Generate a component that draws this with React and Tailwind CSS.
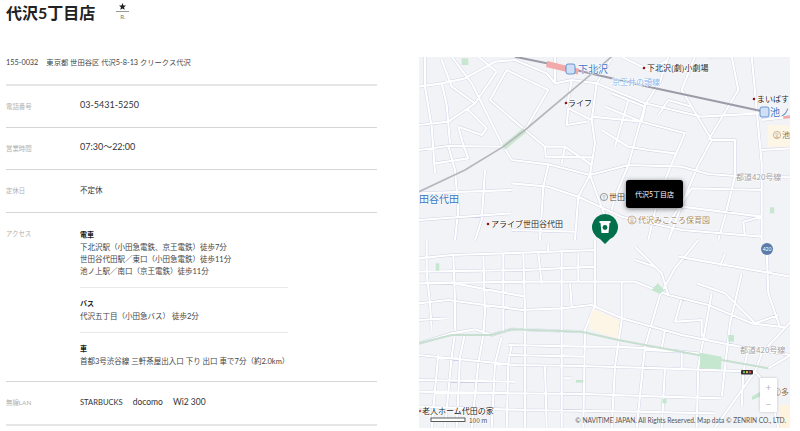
const FONT = "font-['Lato','Noto_Sans_CJK_JP',sans-serif]";

// roads traced from the top half of the map (3x crop coords)
const upperRoads = [
  [[12,300],[100,288],[265,290],[290,330],[400,343],[525,375],[640,345],[800,350],[880,372],[960,378],[1127,382]],
  [[110,20],[170,100],[215,190],[265,290]],
  [[12,110],[80,100],[150,85],[240,35],[300,30],[395,70],[420,100]],
  [[30,110],[50,230],[60,370]],
  [[80,100],[95,165],[105,280]],
  [[12,225],[100,215],[180,160],[245,65]],
  [[130,230],[145,285],[160,325],[60,340]],
  [[155,175],[215,235],[200,255],[130,230]],
  [[275,60],[225,150],[330,240],[400,120],[275,60]],
  [[525,375],[540,280],[530,210],[460,175],[455,225],[515,215]],
  [[530,210],[545,100],[590,25]],
  [[455,170],[470,90],[545,100],[690,160],[860,200],[1035,190]],
  [[640,345],[690,165],[735,95],[760,20]],
  [[560,240],[640,290],[700,300],[780,310]],
  [[590,130],[690,170],[680,215],[570,170]],
  [[530,200],[680,215],[810,250]],
  [[330,240],[390,290],[450,290],[530,345]],
  [[390,290],[392,320],[530,322]],
  [[525,375],[570,500]],
  [[525,375],[490,440],[480,570]],
  [[640,345],[600,440],[590,480]],
  [[730,195],[760,150],[830,170],[890,270],[960,270],[960,378]],
  [[810,250],[775,330],[730,440],[700,570]],
  [[890,270],[850,345],[810,440],[760,570]],
  [[1010,20],[1040,340],[1040,570]],
  [[880,20],[950,20],[970,120],[880,270]],
  [[1040,210],[1127,200]],
  [[1040,300],[1127,295]],
  [[960,378],[930,500],[910,570]],
  [[1040,420],[830,415],[760,520]],
  [[290,420],[12,430]],
  [[210,360],[200,510],[180,570]],
  [[290,400],[400,410],[490,440],[620,500]],
  [[400,345],[385,410],[375,570]],
  [[12,510],[290,490]],
  [[290,540],[480,545]],
  [[620,20],[700,60],[760,30]],
  [[840,20],[800,120],[830,170]],
  [[1040,500],[985,515],[990,560]],
  [[100,288],[120,360],[130,480],[120,570]],
  [[30,20],[30,110]],
  [[190,20],[245,65]],
  [[420,20],[420,100],[470,90]],
  [[640,450],[800,470],[1040,500]],
  [[600,290],[640,150]],
  [[180,160],[110,110],[80,30]],
  [[450,290],[440,340]],
  [[620,500],[800,540],[1040,560]],
];

// roads traced from the bottom half of the map (3x crop coords)
const lowerRoads = [
  [[12,55],[110,45],[330,38],[540,30]],
  [[12,130],[330,125],[540,125],[660,125],[760,165],[880,195],[1010,250],[1110,262]],
  [[12,190],[100,180],[320,210],[440,205],[530,195],[620,235],[800,285],[1000,325],[1127,345]],
  [[12,310],[110,280],[180,268],[230,285],[290,268],[510,275]],
  [[280,315],[510,320],[600,320],[700,325],[850,340]],
  [[12,345],[300,375],[500,378],[740,385],[1020,395]],
  [[12,455],[300,460],[510,462],[740,470],[920,475]],
  [[12,500],[330,510],[660,515],[900,520]],
  [[120,130],[330,170]],
  [[12,95],[330,90],[540,80]],
  [[35,0],[35,100],[45,190],[50,270]],
  [[115,45],[120,180],[120,270]],
  [[205,40],[210,215],[205,285],[190,370],[170,563]],
  [[265,40],[265,130],[265,280]],
  [[325,40],[330,210],[330,563]],
  [[370,40],[380,130]],
  [[440,30],[440,270],[440,563]],
  [[490,40],[490,125]],
  [[465,130],[470,200]],
  [[540,0],[540,195],[510,270],[505,563]],
  [[620,125],[620,240],[600,380],[590,563]],
  [[735,165],[690,320],[665,563]],
  [[800,175],[780,245],[860,240],[860,290]],
  [[890,160],[850,380],[845,563]],
  [[980,100],[945,250],[920,470]],
  [[1055,30],[1060,160],[1095,262]],
  [[845,130],[930,160],[1020,250],[1090,225]],
  [[1127,245],[1040,340],[1020,395],[900,563]],
  [[1020,395],[1060,440],[1090,563]],
  [[660,20],[740,100],[760,165]],
  [[850,0],[780,85],[735,165]],
  [[790,50],[1127,110]],
  [[930,40],[915,80]],
  [[1127,345],[1060,385]],
  [[750,385],[740,563]],
  [[70,345],[60,450],[50,563]],
  [[120,280],[110,350],[90,563]],
  [[260,290],[240,370],[230,563]],
  [[390,380],[395,563]],
  [[12,240],[95,235]],
  [[445,415],[470,415]],
  [[150,280],[135,350],[125,563]],
  [[290,315],[280,370],[275,563]],
  [[690,330],[800,335],[800,385]],
  [[750,270],[740,325]],
  [[1000,325],[985,395],[980,500]],
  [[280,345],[510,350]],
  [[400,10],[400,35]],
  [[660,60],[720,80]],
  [[12,420],[300,425]],
];

// crop coords -> one map-space path
const toPath = (lines, offsetY) =>
  lines
    .map((line) =>
      line
        .map(([x, y], i) => `${i === 0 ? 'M' : 'L'}${(x / 3 - 4).toFixed(1)} ${(y / 3 + offsetY).toFixed(1)}`)
        .join(' ')
    )
    .join(' ');

const roadPath = `${toPath(upperRoads, -7)} ${toPath(lowerRoads, 183)}`;

function Label({ x, y, size = 8, color = '#222222', children }) {
  return (
    <text
      x={x}
      y={y}
      fontSize={size}
      fill={color}
      stroke="#ffffff"
      strokeWidth="1"
      className="[paint-order:stroke] font-['Noto_Sans_CJK_JP',sans-serif]"
    >
      {children}
    </text>
  );
}

function RingIcon({ x, y, r = 3.6, color, glyph }) {
  return (
    <>
      <circle cx={x} cy={y} r={r} fill="none" stroke={color} strokeWidth="0.7" />
      <text x={x} y={y + 1.6} fontSize="4.4" fill={color} textAnchor="middle" className="font-['Noto_Sans_CJK_JP',sans-serif]">{glyph}</text>
    </>
  );
}

function MapDrawing() {
  return (
    <svg viewBox="0 0 371 371" className="absolute inset-0 w-full h-full">
      <polygon points="349,68 371,68 371,90 349,90" fill="#fdf5e6" />
      <polygon points="360,348 371,348 371,371 360,371" fill="#fdf3df" />

      <path d={roadPath} fill="none" stroke="#cdd0e4" strokeWidth="3" strokeLinejoin="round" />
      <path d={roadPath} fill="none" stroke="#ffffff" strokeWidth="2.2" strokeLinejoin="round" />

      {/* parks, canal and the cream block, in crop coords */}
      <g transform="translate(-4,183) scale(0.3333)">
        <polygon points="535,207 612,240 610,296 522,268 522,235" fill="#fdf6e6" />
        <polyline points="12,310 110,285 230,285 290,268 500,275 610,300 850,345 920,360 1060,385" fill="none" stroke="#c6dfd0" strokeWidth="6" />
        <polygon points="710,150 728,130 748,150 735,162" fill="#c5e6cf" />
        <polygon points="855,338 920,350 918,388 855,385" fill="#c5e6cf" />
        <polygon points="940,285 957,285 957,305 940,305" fill="#c5e6cf" />
        <polygon points="1010,470 1035,455 1035,470 1012,480" fill="#c5e6cf" />
        <polygon points="62,70 73,70 73,92 62,92" fill="#c5e6cf" />
        <polygon points="483,420 505,420 505,428 483,428" fill="#c5e6cf" />
        <polygon points="742,476 755,476 755,490 742,490" fill="#c5e6cf" />
      </g>
      <g transform="translate(-4,-7) scale(0.3333)">
        <polygon points="140,25 160,25 160,45 140,45" fill="#c9e6d0" />
        <polygon points="1065,472 1078,472 1078,490 1065,490" fill="#c9e6d0" />
        <polyline points="265,293 330,240" fill="none" stroke="#cbe7d2" strokeWidth="16" />
        <polyline points="12,425 150,360 265,290 330,240 520,80 590,20" fill="none" stroke="#b5b7bd" strokeWidth="5" />
        <polyline points="300,20 395,40 700,110 1035,182" fill="none" stroke="#9b9ba8" strokeWidth="6" />
        <polyline points="395,42 490,65" fill="none" stroke="#f2a9a9" strokeWidth="18" />
        <polyline points="1105,203 1127,200" fill="none" stroke="#f2a9a9" strokeWidth="8" />
      </g>

      {/* station marks */}
      <rect x="147" y="7" width="9" height="10" rx="2" fill="#cfe0f5" stroke="#4a7fc8" strokeWidth="0.8" />
      <rect x="341" y="50" width="9" height="10" rx="2" fill="#cfe0f5" stroke="#4a7fc8" strokeWidth="0.8" />
      <Label x={159} y={16} size={10} color="#3b74c4">下北沢</Label>
      <Label x={351} y={59} size={10} color="#3b74c4">池ノ</Label>
      <Label x={0} y={146} size={10} color="#3b74c4">田谷代田</Label>
      <Label x={193} y={28} color="#84b3ee">京王井の頭線</Label>

      <circle cx="225" cy="11" r="1.3" fill="#8c1616" />
      <Label x={228} y={14}>下北沢(劇)小劇場</Label>
      <circle cx="147" cy="46" r="1.3" fill="#8c1616" />
      <Label x={149} y={49}>ライフ</Label>
      <circle cx="335" cy="42" r="1.3" fill="#8c1616" />
      <Label x={338} y={45}>まいばす</Label>
      <circle cx="69" cy="167" r="1.3" fill="#8c1616" />
      <Label x={72} y={170}>アライブ世田谷代田</Label>
      <circle cx="1" cy="354" r="1.3" fill="#c06060" />
      <Label x={3} y={357}>老人ホーム代田の家</Label>

      <RingIcon x={358} y={78} color="#b79a70" glyph="文" />
      <Label x={363} y={81} color="#8a6d45">池</Label>
      <RingIcon x={185} y={140} color="#777777" glyph="〒" />
      <Label x={190} y={143} color="#444444">世田谷</Label>
      <RingIcon x={213} y={163} r={4} color="#c19a6b" glyph="文" />
      <Label x={219} y={166} color="#a58a64">代沢みこころ保育園</Label>
      <RingIcon x={358} y={335} color="#c19a6b" glyph="文" />
      <Label x={362} y={338} color="#8a6d45">多</Label>

      <Label x={317} y={123} color="#a0a0a6">都道420号線</Label>
      <Label x={321} y={296} color="#a0a0a6">都道420号線</Label>

      {/* route shield */}
      <circle cx="348" cy="192" r="6" fill="#5b7ca8" />
      <text x="348" y="194" fontSize="5" fill="#ffffff" textAnchor="middle" className="font-['Lato',sans-serif]">420</text>

      {/* signal */}
      <rect x="322" y="313" width="12" height="4.5" rx="1" fill="#333333" />
      <circle cx="325" cy="315.2" r="1.1" fill="#7fc56a" />
      <circle cx="328" cy="315.2" r="1.1" fill="#e8c44a" />
      <circle cx="331" cy="315.2" r="1.1" fill="#d9534f" />

      {/* scale bar */}
      <rect x="12" y="361" width="34" height="3.5" fill="#ffffff" stroke="#333333" strokeWidth="0.8" />
      <Label x={50} y={366} size={6.5} color="#444444">100 m</Label>
    </svg>
  );
}

function StorePin() {
  return (
    <div className="absolute left-[173px] top-[157px] w-[26px] h-[30px]">
      <svg viewBox="0 0 26 30" className="w-full h-full">
        <path d="M13 0a13 13 0 0 1 5 25l-5 5-5-5A13 13 0 0 1 13 0z" fill="#00704a" />
        <path d="M7.5 7h11v2h-1l-1 10h-7l-1-10h-1z" fill="#ffffff" />
        <circle cx="13" cy="13.5" r="2.4" fill="#00704a" />
      </svg>
    </div>
  );
}

function Tooltip() {
  return (
    <div className="absolute left-[207px] top-[123px] w-[57px] h-[28px] rounded-[3px] bg-black shadow-[0_1px_5px_rgba(0,0,0,0.5)] flex items-center justify-center text-white text-[7px]">
      代沢5丁目店
    </div>
  );
}

function ZoomControl() {
  return (
    <div className="absolute left-[341px] top-[321px] w-[17px] h-[34px] bg-white rounded-[1px] shadow-[0_0_3px_rgba(0,0,0,0.2)] flex flex-col items-center justify-around text-[10px] leading-none text-[#b5b5b5]">
      <span>+</span>
      <span>−</span>
    </div>
  );
}

function MapPanel() {
  return (
    <div className="relative w-[371px] h-[371px] mt-[57px] ml-[42px] overflow-hidden bg-[#f2f3f6] shrink-0">
      <MapDrawing />
      <StorePin />
      <Tooltip />
      <ZoomControl />
      <div className="absolute right-[4px] bottom-[4px] text-[6.6px] leading-none text-[#555555] whitespace-nowrap">
        © NAVITIME JAPAN. All Rights Reserved. Map data © ZENRIN CO., LTD.
      </div>
    </div>
  );
}

function InfoRow({ label, height, children }) {
  return (
    <div className={`flex border-b border-[#d6d6d6] ${height}`}>
      <div className="w-[74px] shrink-0 pt-[16px] text-[6.4px] leading-[9px] text-[#b0b0b0]">{label}</div>
      <div className="grow pt-[13px] text-[#333333]">{children}</div>
    </div>
  );
}

function AccessBlock({ title, lines, divider }) {
  return (
    <div className={divider ? 'w-[208px] pb-[9px] mb-[9px] border-b border-[#e8e8e8]' : 'w-[208px]'}>
      <div className="text-[7px] leading-[12px] font-bold text-[#222222]">{title}</div>
      <div className="mt-[2px] text-[7.5px] leading-[12px] text-[#444444] whitespace-nowrap">
        {lines.map((l) => (
          <div key={l}>{l}</div>
        ))}
      </div>
    </div>
  );
}

function StoreInfo() {
  return (
    <div className="w-[371px] ml-[6px] shrink-0">
      <div className="flex h-[27px] items-start">
        <h1 className="text-[16px] leading-[26px] font-bold text-[#222222]">代沢5丁目店</h1>
        <div className="ml-[21px] mt-[3px] w-[13px] flex flex-col items-center">
          <svg viewBox="0 0 10 10" className="w-[7px] h-[7px]">
            <path d="M5 0l1.4 3.4L10 3.7 7.2 6l.9 3.6L5 7.7 1.9 9.6 2.8 6 0 3.7l3.6-.3z" fill="#222222" />
          </svg>
          <div className="w-full h-px shrink-0 bg-[#999999] mt-[1px]" />
          <div className="text-[6px] leading-[8px] text-[#777777] mt-[1px]">R.</div>
        </div>
      </div>

      <div className="h-[59px] pt-[30px] border-b-2 border-[#e6e6e6] text-[7.3px] leading-[12px] text-[#444444] whitespace-nowrap">
        <span>155-0032</span>
        <span className="ml-[8px]">東京都 世田谷区 代沢5-8-13 クリークス代沢</span>
      </div>

      <InfoRow label="電話番号" height="h-[42px]">
        <div className="text-[9px] leading-[12px]">03-5431-5250</div>
      </InfoRow>
      <InfoRow label="営業時間" height="h-[42px]">
        <div className="text-[9px] leading-[12px]">07:30～22:00</div>
      </InfoRow>
      <InfoRow label="定休日" height="h-[43px]">
        <div className="text-[7.5px] leading-[12px] pt-[2px]">不定休</div>
      </InfoRow>

      <div className="flex h-[169px] border-b border-[#d6d6d6]">
        <div className="w-[74px] shrink-0 pt-[16px] text-[6.4px] leading-[9px] text-[#b0b0b0]">アクセス</div>
        <div className="pt-[15px]">
          <AccessBlock
            divider
            title="電車"
            lines={[
              '下北沢駅（小田急電鉄、京王電鉄）徒歩7分',
              '世田谷代田駅／東口（小田急電鉄）徒歩11分',
              '池ノ上駅／南口（京王電鉄）徒歩11分',
            ]}
          />
          <AccessBlock divider title="バス" lines={['代沢五丁目（小田急バス） 徒歩2分']} />
          <AccessBlock title="車" lines={['首都3号渋谷線 三軒茶屋出入口 下り 出口 車で7分（約2.0km）']} />
        </div>
      </div>

      <div className="flex h-[44px] border-b-2 border-[#e6e6e6]">
        <div className="w-[74px] shrink-0 pt-[16px] text-[6.4px] leading-[9px] text-[#b0b0b0]">無線LAN</div>
        <div className="pt-[14px] flex items-baseline gap-[10px] text-[8.5px] leading-[12px] text-[#333333]">
          <span className="text-[7.6px]">STARBUCKS</span>
          <span>docomo</span>
          <span>Wi2 300</span>
        </div>
      </div>
    </div>
  );
}

export default function App() {
  return (
    <div className={`flex w-[800px] h-[431px] overflow-hidden bg-white ${FONT}`}>
      <StoreInfo />
      <MapPanel />
    </div>
  );
}
